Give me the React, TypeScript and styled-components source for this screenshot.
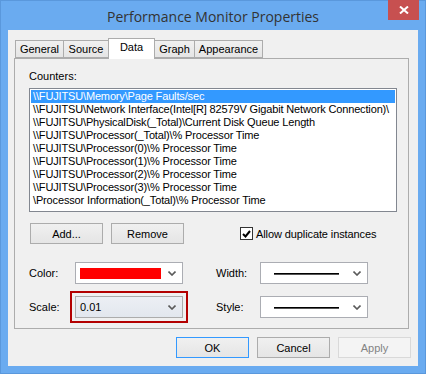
import React from 'react';
import styled, { createGlobalStyle } from 'styled-components';

const GlobalStyle = createGlobalStyle`
  html, body {
    margin: 0;
    padding: 0;
    background: #ffffff;
  }
  * {
    box-sizing: border-box;
  }
`;

const UI_FONT = `'Liberation Sans', Tahoma, Arial, sans-serif`;

const Window = styled.div`
  width: 426px;
  height: 374px;
  background: #6aabf0;
  border: 1px solid #5a98dc;
  display: flex;
  flex-direction: column;
  font-family: ${UI_FONT};
  font-size: 11px;
  color: #000;
`;

const TitleBar = styled.div`
  height: 29px;
  display: grid;
  grid-template-columns: 1fr auto 1fr;
  align-items: center;
`;

const Title = styled.div`
  grid-column: 2;
  font-family: 'Open Sans', 'Noto Sans', sans-serif;
  font-size: 14px;
  color: #333;
  padding-top: 1px;
`;

const CloseButton = styled.div`
  grid-column: 3;
  justify-self: end;
  align-self: start;
  margin-top: -1px;
  margin-right: 6px;
  width: 31px;
  height: 20px;
  background: #c75050;
  display: flex;
  align-items: center;
  justify-content: center;
`;

const Client = styled.div`
  flex: 1;
  margin: 0 7px 7px;
  background: #f0f0f0;
  padding: 10px 9px 0 6px;
  display: flex;
  flex-direction: column;
`;

const TabStrip = styled.div`
  display: flex;
  align-items: flex-end;
  height: 18px;
  padding-left: 2px;
  position: relative;
  z-index: 1;
`;

const Tab = styled.div<{ $w: number; $active?: boolean }>`
  width: ${(p) => p.$w}px;
  height: ${(p) => (p.$active ? 21 : 18)}px;
  margin-left: -1px;
  margin-bottom: ${(p) => (p.$active ? -1 : 0)}px;
  border: 1px solid #acacac;
  border-bottom: ${(p) => (p.$active ? 'none' : '1px solid #acacac')};
  background: ${(p) => (p.$active ? '#ffffff' : 'linear-gradient(#f0f0f0, #e5e5e5)')};
  display: flex;
  justify-content: center;
  padding-top: 2px;
  white-space: nowrap;
`;

const Panel = styled.div`
  height: 271px;
  border: 1px solid #acacac;
  padding: 11px 14px 0;
  display: flex;
  flex-direction: column;
`;

const FieldLabel = styled.div`
  height: 13px;
  line-height: 13px;
  margin-bottom: 5px;
`;

const ListBox = styled.div`
  width: 368px;
  height: 124px;
  border: 1px solid #828790;
  background: #ffffff;
  padding: 1px;
  overflow: hidden;
`;

const ListRow = styled.div<{ $selected?: boolean }>`
  height: 13px;
  line-height: 13px;
  padding-left: 2px;
  white-space: nowrap;
  overflow: hidden;
  letter-spacing: -0.15px;
  background: ${(p) => (p.$selected ? '#3399ff' : 'transparent')};
  color: ${(p) => (p.$selected ? '#ffffff' : '#000000')};
`;

const ActionRow = styled.div`
  display: flex;
  align-items: center;
  gap: 8px;
  margin-top: 11px;
  padding-left: 1px;
`;

const Button = styled.div<{ $variant?: 'default' | 'disabled' }>`
  width: 73px;
  height: 21px;
  border: 1px solid
    ${(p) =>
      p.$variant === 'default' ? '#3399ff' : p.$variant === 'disabled' ? '#d9d9d9' : '#acacac'};
  background: ${(p) =>
    p.$variant === 'disabled' ? '#f4f4f4' : 'linear-gradient(#f0f0f0, #e5e5e5)'};
  color: ${(p) => (p.$variant === 'disabled' ? '#838383' : '#000')};
  display: flex;
  align-items: center;
  justify-content: center;
`;

const CheckField = styled.label`
  display: flex;
  align-items: center;
  gap: 3px;
  margin-left: 48px;
  letter-spacing: -0.1px;
`;

const CheckBox = styled.div`
  width: 13px;
  height: 13px;
  border: 1px solid #333;
  background: #fff;
  display: flex;
  align-items: center;
  justify-content: center;
`;

const PropGrid = styled.div`
  display: grid;
  grid-template-columns: 46px 108px 33px 44px 108px;
  grid-auto-rows: 22px;
  row-gap: 12px;
  align-items: center;
  margin-top: 18px;
`;

const PropLabel = styled.div<{ $col: number }>`
  grid-column: ${(p) => p.$col};
`;

const Combo = styled.div<{ $col: number; $readonly?: boolean; $marked?: boolean }>`
  grid-column: ${(p) => p.$col};
  height: 22px;
  border: 1px solid ${(p) => (p.$readonly ? '#acacac' : '#abadb3')};
  background: ${(p) => (p.$readonly ? 'linear-gradient(#eceff4, #e2e7ee)' : '#ffffff')};
  display: flex;
  align-items: center;
  padding: 0 6px 0 4px;
  gap: 4px;
  outline: ${(p) => (p.$marked ? '2px solid #b30000' : 'none')};
  outline-offset: 3px;
`;

const ComboValue = styled.div`
  flex: 1;
  display: flex;
  align-items: center;
`;

const Swatch = styled.div`
  width: 81px;
  height: 11px;
  background: #ff0000;
`;

const LineSample = styled.div`
  width: 65px;
  height: 1px;
  margin-left: 9px;
  background: #000;
  box-shadow: 0 1px 0 #555;
`;

const Footer = styled.div`
  display: flex;
  justify-content: flex-end;
  gap: 8px;
  margin-top: 8px;
  margin-right: -2px;
`;

const Chevron = () => (
  <svg width="8" height="5" viewBox="0 0 8 5">
    <path d="M0.5 0.5 L4 4 L7.5 0.5" fill="none" stroke="#5a5a5a" strokeWidth="1.6" />
  </svg>
);

const counters = [
  '\\\\FUJITSU\\Memory\\Page Faults/sec',
  '\\\\FUJITSU\\Network Interface(Intel[R] 82579V Gigabit Network Connection)\\',
  '\\\\FUJITSU\\PhysicalDisk(_Total)\\Current Disk Queue Length',
  '\\\\FUJITSU\\Processor(_Total)\\% Processor Time',
  '\\\\FUJITSU\\Processor(0)\\% Processor Time',
  '\\\\FUJITSU\\Processor(1)\\% Processor Time',
  '\\\\FUJITSU\\Processor(2)\\% Processor Time',
  '\\\\FUJITSU\\Processor(3)\\% Processor Time',
  '\\Processor Information(_Total)\\% Processor Time',
];

const tabs = [
  { name: 'General', w: 49 },
  { name: 'Source', w: 46 },
  { name: 'Data', w: 47, active: true },
  { name: 'Graph', w: 41 },
  { name: 'Appearance', w: 69 },
];

const App: React.FC = () => {
  return (
    <>
      <GlobalStyle />
      <Window>
        <TitleBar>
          <Title>Performance Monitor Properties</Title>
          <CloseButton>
            <svg width="10" height="8" viewBox="0 0 10 8">
              <path d="M1 0.5 L9 7.5 M9 0.5 L1 7.5" stroke="#fff" strokeWidth="2" />
            </svg>
          </CloseButton>
        </TitleBar>
        <Client>
          <TabStrip>
            {tabs.map((t) => (
              <Tab key={t.name} $w={t.w} $active={t.active}>
                {t.name}
              </Tab>
            ))}
          </TabStrip>
          <Panel>
            <FieldLabel>Counters:</FieldLabel>
            <ListBox>
              {counters.map((c, i) => (
                <ListRow key={c} $selected={i === 0}>
                  {c}
                </ListRow>
              ))}
            </ListBox>
            <ActionRow>
              <Button>Add...</Button>
              <Button>Remove</Button>
              <CheckField>
                <CheckBox>
                  <svg width="9" height="8" viewBox="0 0 9 8">
                    <path d="M1 4 L3.5 6.5 L8 1" fill="none" stroke="#000" strokeWidth="2" />
                  </svg>
                </CheckBox>
                Allow duplicate instances
              </CheckField>
            </ActionRow>
            <PropGrid>
              <PropLabel $col={1}>Color:</PropLabel>
              <Combo $col={2}>
                <ComboValue>
                  <Swatch />
                </ComboValue>
                <Chevron />
              </Combo>
              <PropLabel $col={4}>Width:</PropLabel>
              <Combo $col={5}>
                <ComboValue>
                  <LineSample />
                </ComboValue>
                <Chevron />
              </Combo>
              <PropLabel $col={1}>Scale:</PropLabel>
              <Combo $col={2} $readonly $marked>
                <ComboValue>0.01</ComboValue>
                <Chevron />
              </Combo>
              <PropLabel $col={4}>Style:</PropLabel>
              <Combo $col={5}>
                <ComboValue>
                  <LineSample />
                </ComboValue>
                <Chevron />
              </Combo>
            </PropGrid>
          </Panel>
          <Footer>
            <Button $variant="default">OK</Button>
            <Button>Cancel</Button>
            <Button $variant="disabled">Apply</Button>
          </Footer>
        </Client>
      </Window>
    </>
  );
};

export default App;
